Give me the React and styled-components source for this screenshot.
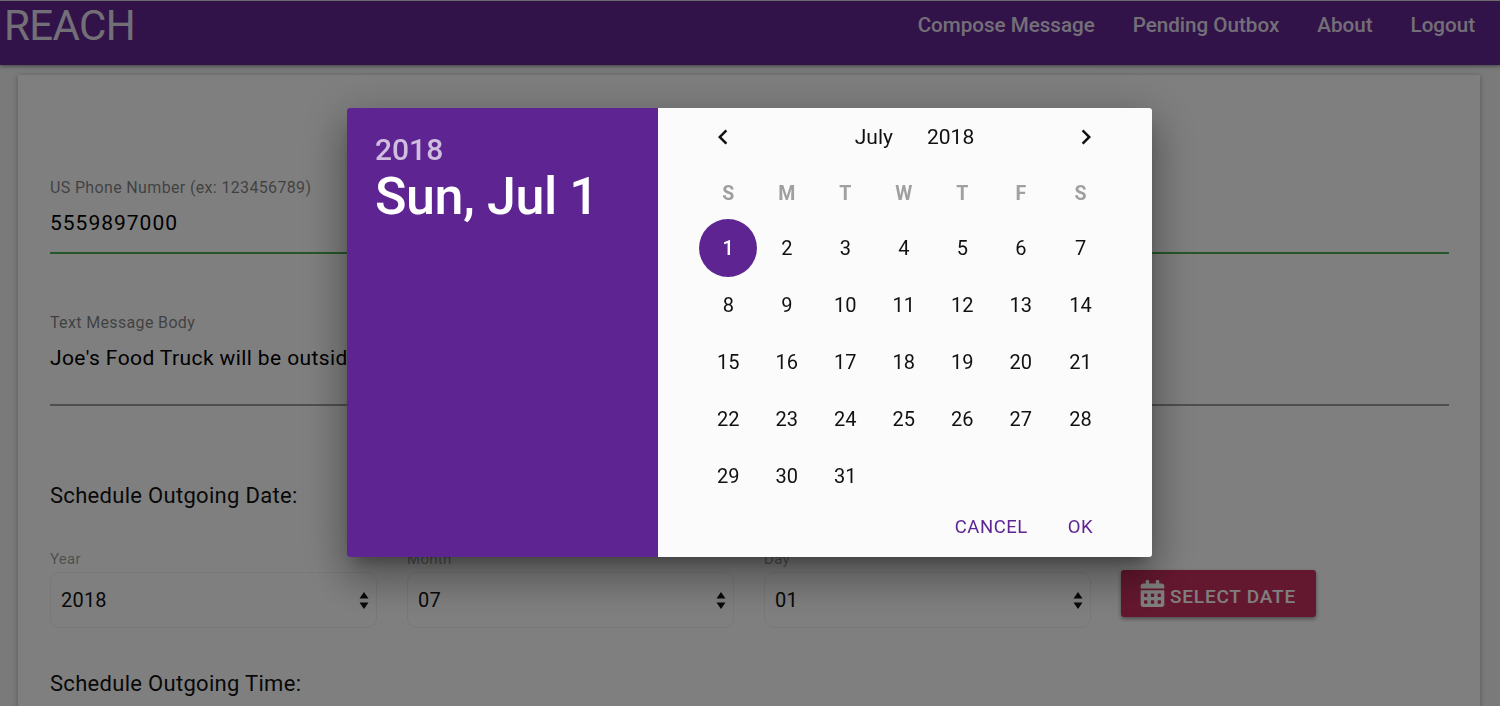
import React from "react"
import styled, { createGlobalStyle } from "styled-components"
import { FaCalendarAlt } from "react-icons/fa"
import { MdKeyboardArrowLeft, MdKeyboardArrowRight } from "react-icons/md"

const GlobalStyle = createGlobalStyle`
    html, body {
        margin: 0;
        height: 706px;
        overflow: hidden;
        background: #f4f4f4;
        font-family: Roboto, "Liberation Sans", sans-serif;
    }
`

const Nav = styled.nav`
    height: 64px;
    margin-top: 1px;
    padding: 0 25px 0 4px;

    display: flex;
    justify-content: space-between;
    align-items: flex-start;

    background: #622492;
    box-shadow: 0 1px 4px rgba(0,0,0,.5);
`

const Brand = styled.div`
    margin-top: 1px;

    font-size: 42px;
    line-height: 48px;
    letter-spacing: -0.6px;
    color: #fff;
    opacity: .85;
`

const NavLinks = styled.ul`
    margin: 0;
    padding: 11px 0 0;

    display: flex;
    gap: 38px;

    list-style: none;
`

const NavLink = styled.li`
    font-size: 20.6px;
    line-height: 26px;
    font-weight: 500;
    color: #fff;
    opacity: .85;
`

const Card = styled.main`
    height: 640px;
    margin: 10px 20px 0 18px;
    padding: 104px 31px 0 32px;
    box-sizing: border-box;

    background: #fff;
    box-shadow: 0 1px 5px rgba(0,0,0,.3);
`

const Field = styled.div`
    height: ${props => props.height}px;
    margin-bottom: ${props => props.gap}px;

    border-bottom: 2px solid ${props => props.valid ? "#4caf50" : "#9e9e9e"};
`

const FieldLabel = styled.div`
    font-size: 16px;
    line-height: 18px;
    letter-spacing: .35px;
    color: rgba(0,0,0,.5);
`

const FieldValue = styled.div`
    margin-top: 12px;

    font-size: 21px;
    line-height: 28px;
    letter-spacing: ${props => props.numeric ? "1px" : ".4px"};
    color: #000;
`

const SectionTitle = styled.h3`
    margin: ${props => props.top}px 0 0;

    font-size: 22px;
    line-height: 28px;
    font-weight: 400;
    letter-spacing: .3px;
    color: #111;
`

const DateRow = styled.div`
    margin-top: 40px;

    display: flex;
    gap: 30px;
`

const SelectGroup = styled.div`
    width: 327px;
`

const SelectLabel = styled.div`
    height: 18px;

    font-size: 15px;
    line-height: 18px;
    letter-spacing: .3px;
    color: rgba(0,0,0,.4);
`

const Select = styled.div`
    height: 56px;
    margin-top: 4px;
    padding: 0 6px 0 10px;
    box-sizing: border-box;

    display: flex;
    justify-content: space-between;
    align-items: center;

    border: 1px solid #f0f0f0;
    border-radius: 10px;

    font-size: 20px;
    letter-spacing: .2px;
    color: #111;
`

const Button = styled.button`
    width: 195px;
    height: 47px;
    margin-top: 20px;
    padding: 0 0 0 18px;

    display: flex;
    align-items: center;
    gap: 4px;

    border: none;
    border-radius: 3px;
    background: #c9305f;
    box-shadow: 0 2px 4px rgba(0,0,0,.4);

    font: 500 19px Roboto, sans-serif;
    letter-spacing: .8px;
    color: #fff;
`

const ButtonText = styled.span`
    padding-top: 6px;
`

const Overlay = styled.div`
    position: fixed;
    inset: 0;
    padding: 108px 1px 0 0;

    display: flex;
    justify-content: center;
    align-items: flex-start;

    background: rgba(0,0,0,.5);
`

const Dialog = styled.div`
    width: 805px;
    height: 449px;

    display: flex;

    overflow: hidden;
    border-radius: 3px;
    box-shadow: 0 11px 15px -7px rgba(0,0,0,.3), 0 24px 38px 3px rgba(0,0,0,.2), 0 9px 46px 8px rgba(0,0,0,.18);
`

const DateBanner = styled.div`
    width: 311px;
    padding: 24px 28px;
    box-sizing: border-box;

    background: #5e2592;
    color: #fff;
`

const BannerYear = styled.div`
    font-size: 30px;
    line-height: 36px;
    font-weight: 500;
    opacity: .7;
`

const BannerDate = styled.div`
    margin-top: 1px;

    font-size: 52px;
    line-height: 56px;
    font-weight: 500;
    letter-spacing: -0.4px;
`

const CalendarPane = styled.div`
    flex: 1;
    padding: 0 40px 0 41px;

    display: flex;
    flex-direction: column;

    background: #fbfbfb;
`

const MonthBar = styled.div`
    height: 58px;
    margin-right: 2px;

    display: flex;
    justify-content: space-between;
    align-items: center;

    font-size: 21px;
    color: #111;
`

const MonthName = styled.div`
    padding-left: 20px;

    display: flex;
    gap: 34px;
`

const Arrow = styled.span`
    width: 48px;

    display: flex;
    justify-content: center;
`

const DayGrid = styled.div`
    display: grid;
    grid-template-columns: repeat(6, 58.5px) 61px;
    grid-template-rows: 53px;
    grid-auto-rows: 57px;
`

const WeekDay = styled.div`
    padding-top: 1px;

    display: flex;
    justify-content: center;
    align-items: center;

    font-size: 19.5px;
    font-weight: 700;
    color: #a0a0a0;
`

const Day = styled.div`
    width: 58px;
    height: 58px;
    justify-self: center;

    display: flex;
    justify-content: center;
    align-items: center;

    border-radius: 50%;
    background: ${props => props.selected ? "#5e2592" : "transparent"};

    font-size: 20px;
    font-weight: ${props => props.selected ? 500 : 400};
    color: ${props => props.selected ? "#fff" : "#111"};
`

const Actions = styled.div`
    margin-top: 11px;
    padding-right: 19px;

    display: flex;
    justify-content: flex-end;
    gap: 40px;
`

const ActionButton = styled.span`
    font-size: 18.5px;
    line-height: 24px;
    letter-spacing: .5px;
    color: #5e2592;
`

const SortIcon = () => (
    <svg width="12" height="19" viewBox="0 0 12 19">
        <path d="M6 1l4.5 6.5h-9zM6 18L1.5 11.5h9z" fill="#111" />
    </svg>
)

const days = Array.from({ length: 31 }, (_, i) => i + 1)

const selects = [
    { label: "Year", value: "2018" },
    { label: "Month", value: "07" },
    { label: "Day", value: "01" },
]

export default function App() {
    return (
        <>
            <GlobalStyle />
            <Nav>
                <Brand>REACH</Brand>
                <NavLinks>
                    <NavLink>Compose Message</NavLink>
                    <NavLink>Pending Outbox</NavLink>
                    <NavLink>About</NavLink>
                    <NavLink>Logout</NavLink>
                </NavLinks>
            </Nav>
            <Card>
                <Field height={73} gap={60} valid>
                    <FieldLabel>US Phone Number (ex: 123456789)</FieldLabel>
                    <FieldValue numeric>5559897000</FieldValue>
                </Field>
                <Field height={90} gap={0}>
                    <FieldLabel>Text Message Body</FieldLabel>
                    <FieldValue>Joe's Food Truck will be outside</FieldValue>
                </Field>
                <SectionTitle top={76}>Schedule Outgoing Date:</SectionTitle>
                <DateRow>
                    {selects.map(select => (
                        <SelectGroup key={select.label}>
                            <SelectLabel>{select.label}</SelectLabel>
                            <Select>
                                {select.value}
                                <SortIcon />
                            </Select>
                        </SelectGroup>
                    ))}
                    <Button>
                        <FaCalendarAlt size={27} />
                        <ButtonText>SELECT DATE</ButtonText>
                    </Button>
                </DateRow>
                <SectionTitle top={42}>Schedule Outgoing Time:</SectionTitle>
            </Card>
            <Overlay>
                <Dialog>
                    <DateBanner>
                        <BannerYear>2018</BannerYear>
                        <BannerDate>Sun, Jul 1</BannerDate>
                    </DateBanner>
                    <CalendarPane>
                        <MonthBar>
                            <Arrow><MdKeyboardArrowLeft size={30} /></Arrow>
                            <MonthName>
                                <span>July</span>
                                <span>2018</span>
                            </MonthName>
                            <Arrow><MdKeyboardArrowRight size={30} /></Arrow>
                        </MonthBar>
                        <DayGrid>
                            {["S", "M", "T", "W", "T", "F", "S"].map((day, i) => (
                                <WeekDay key={i}>{day}</WeekDay>
                            ))}
                            {days.map(day => (
                                <Day key={day} selected={day === 1}>{day}</Day>
                            ))}
                        </DayGrid>
                        <Actions>
                            <ActionButton>CANCEL</ActionButton>
                            <ActionButton>OK</ActionButton>
                        </Actions>
                    </CalendarPane>
                </Dialog>
            </Overlay>
        </>
    )
}
